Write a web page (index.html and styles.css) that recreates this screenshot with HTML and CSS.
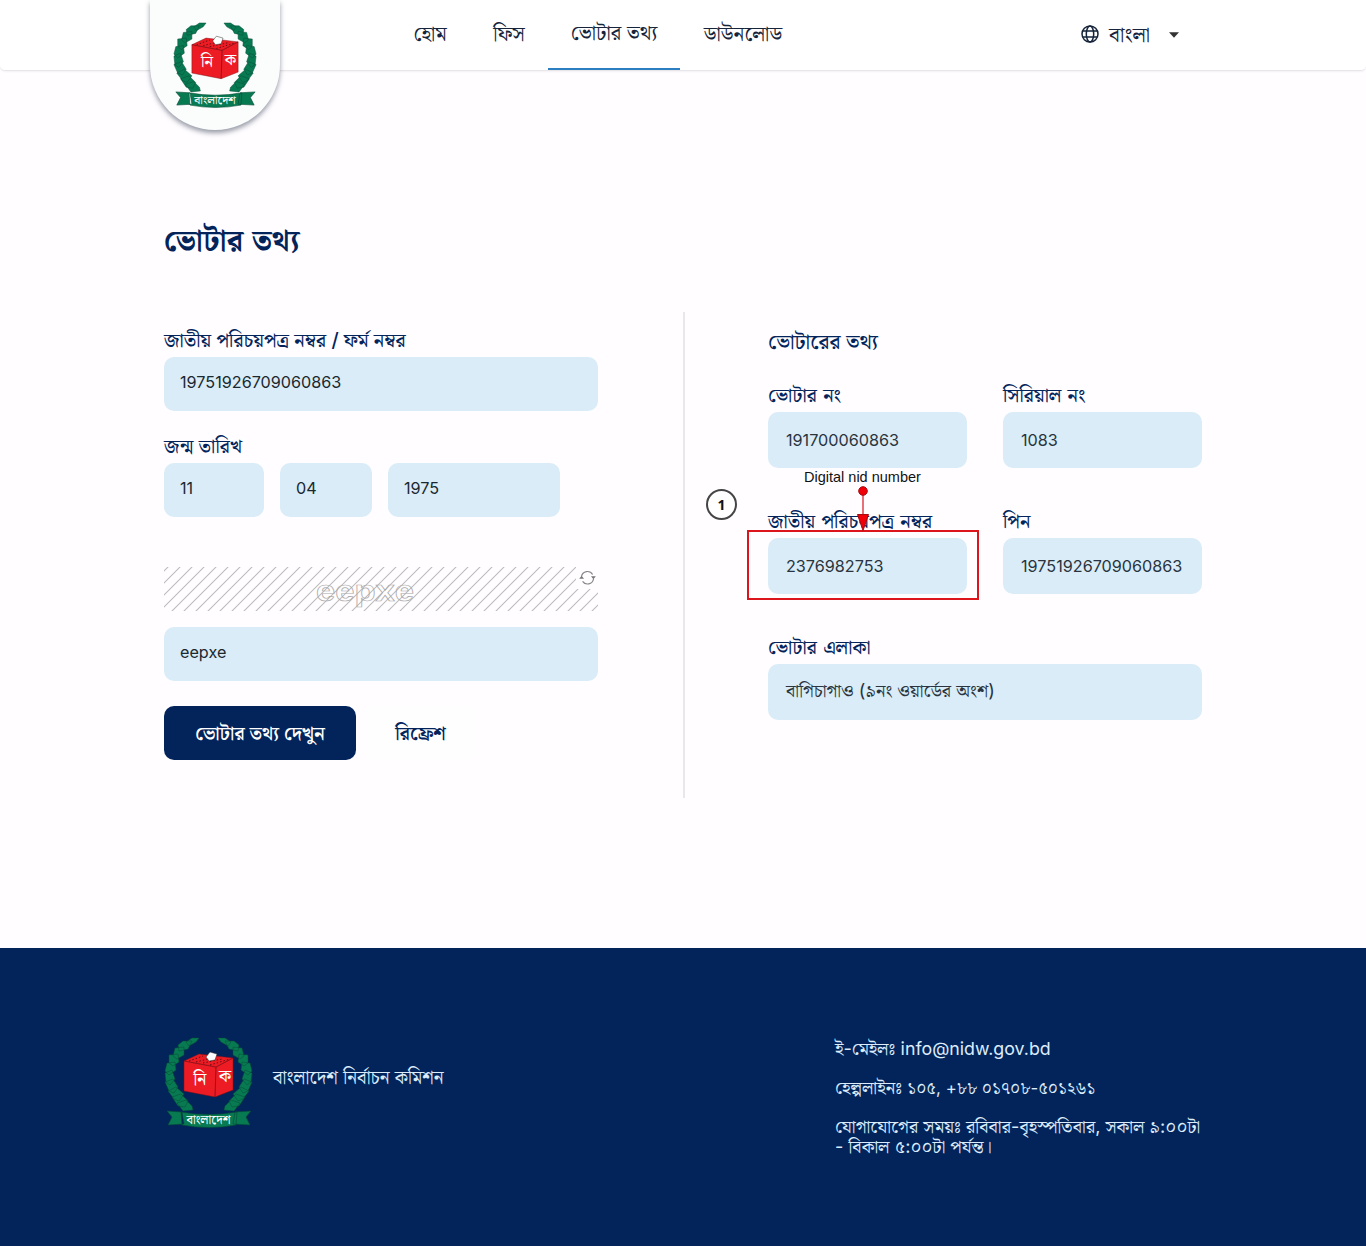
FILE: index.html
```html
<!DOCTYPE html>
<html lang="bn">
<head>
<meta charset="utf-8">
<title>ভোটার তথ্য</title>
<link rel="stylesheet" href="styles.css">
</head>
<body>
<svg class="defs" width="0" height="0" aria-hidden="true">
  <defs>
    <g id="branch" fill="#087a52" stroke="#064a35" stroke-width=".5">
      <path d="M35 1L28 1 22 5 25 9 32 5ZM28 4L19 4 14 8 15 14 24 12ZM20 10L11 11 9 19 13 22 20 18ZM14 17L5 18 5 26 9 29 15 25ZM11 25L3 26 1 34 5 38 12 33ZM8 33L1 36 2 45 6 48 11 42ZM9 42L1 45 5 54 10 56 14 50ZM12 50L4 54 10 62 15 64 20 57ZM17 57L8 60 14 69 21 70 24 64ZM22 63L13 66 19 74 29 73 28 69Z"/>
    </g>
    <symbol id="emblem" viewBox="0 0 89 91">
      <use href="#branch"/>
      <use href="#branch" transform="translate(89 0) scale(-1 1)"/>
      <path fill="#ed1c24" stroke="#7d1118" stroke-width=".5" d="M20 24L35 17 69 21 52 30ZM20 24L52 30 51 60 20 54ZM52 30L69 21V53L51 60Z"/>
      <path fill="none" stroke="#5e0c12" stroke-width="1" stroke-dasharray="1.5 2" d="M25 24L39 19M32 25L44 22M39 26L58 22M46 28L66 22"/>
      <path fill="#fff" stroke="#222" stroke-width=".5" d="M42 20L46 15 53 17 51 23 45 24Z"/>
      <path fill="#087a52" stroke="#064a35" stroke-width=".6" d="M18 75L3 74 8 80 4 88 20 87ZM71 75L87 74 82 80 86 88 69 87ZM17 75Q45 80 73 75L72 88Q45 93 18 88Z"/>
      <text x="36" y="48" class="emblem-letter">নি</text>
      <text x="61" y="45" class="emblem-letter">ক</text>
      <text x="44.5" y="86.5" class="emblem-name" textLength="44" lengthAdjust="spacingAndGlyphs">বাংলাদেশ</text>
    </symbol>
    <pattern id="hatch" width="12" height="44" patternUnits="userSpaceOnUse">
      <path d="M-41 45L5 -1M-29 45L17 -1M-17 45L29 -1M-5 45L41 -1M7 45L53 -1" stroke="#bcbabc" stroke-width="1.1"/>
    </pattern>
  </defs>
</svg>

<header class="topbar">
  <a class="badge"><svg class="badge-logo"><use href="#emblem"/></svg></a>
  <nav class="menu">
    <a class="menu-item home"><span>হোম</span></a>
    <a class="menu-item fees"><span>ফিস</span></a>
    <a class="menu-item voter active"><span>ভোটার তথ্য</span></a>
    <a class="menu-item download"><span>ডাউনলোড</span></a>
  </nav>
  <div class="language">
    <svg width="18" height="18" viewBox="0 0 18 18" fill="none" stroke="#15243a" stroke-width="1.5"><circle cx="9" cy="9" r="8"/><ellipse cx="9" cy="9" rx="3.7" ry="8"/><path d="M1.8 6H16.2M1.8 12H16.2"/></svg>
    <span>বাংলা</span>
    <svg class="caret" width="10" height="6" viewBox="0 0 10 6"><path d="M0 .3H10L5 5.7Z" fill="#333"/></svg>
  </div>
</header>

<main class="page">
  <h1 class="title">ভোটার তথ্য</h1>
  <div class="columns">
    <form class="search">
      <label class="label">জাতীয় পরিচয়পত্র নম্বর / ফর্ম নম্বর</label>
      <div class="input">19751926709060863</div>
      <label class="label second">জন্ম তারিখ</label>
      <div class="date">
        <div class="input">11</div>
        <div class="input">04</div>
        <div class="input">1975</div>
      </div>
      <svg class="captcha" width="434" height="44" viewBox="0 0 434 44">
        <rect width="434" height="44" fill="url(#hatch)"/>
        <text x="201" y="34" textLength="98" lengthAdjust="spacingAndGlyphs" class="captcha-text">eepxe</text>
        <rect x="412" width="22" height="22" fill="#fffdff"/>
        <g fill="none" stroke="#888" stroke-width="1.2"><path d="M417.5 9.5A6 6 0 0 1 428.6 7.5M429.5 12A6 6 0 0 1 418.6 14.3"/></g>
        <path fill="#777" d="M415.2 11.8H420L417.6 8.8ZM427 9.2H431.8L429.4 12.2Z"/>
      </svg>
      <div class="input">eepxe</div>
      <div class="actions">
        <button type="button" class="btn primary"><span>ভোটার তথ্য দেখুন</span></button>
        <button type="button" class="btn ghost"><span>রিফ্রেশ</span></button>
      </div>
    </form>

    <section class="result">
      <h2 class="subtitle">ভোটারের তথ্য</h2>
      <div class="grid">
        <div class="field"><span class="label">ভোটার নং</span><div class="value">191700060863</div></div>
        <div class="field"><span class="label">সিরিয়াল নং</span><div class="value">1083</div></div>
        <div class="field"><span class="label">জাতীয় পরিচয়পত্র নম্বর</span><div class="value">2376982753</div></div>
        <div class="field"><span class="label">পিন</span><div class="value">19751926709060863</div></div>
        <div class="field wide"><span class="label">ভোটার এলাকা</span><div class="value area">বাগিচাগাও (৯নং ওয়ার্ডের অংশ)</div></div>
      </div>
      <div class="note-box"></div>
      <div class="note-text">Digital nid number</div>
      <div class="note-number">1</div>
      <svg class="note-arrow" width="14" height="46" viewBox="0 0 14 46"><path d="M7 5V32" stroke="#d9141e" stroke-width="1.2"/><circle cx="7" cy="5" r="4.3" fill="#f00008" stroke="#a80b12"/><path d="M1.5 28.5H12.5L7 44.5Z" fill="#f00008" stroke="#a80b12"/></svg>
    </section>
  </div>
</main>

<footer class="footer">
  <div class="brand">
    <svg class="brand-logo"><use href="#emblem"/></svg>
    <span>বাংলাদেশ নির্বাচন কমিশন</span>
  </div>
  <div class="contact">
    <p>ই-মেইলঃ <span class="mail">info@nidw.gov.bd</span></p>
    <p>হেল্পলাইনঃ <span class="phone">১০৫, +৮৮ ০১৭০৮-৫০১২৬১</span></p>
    <p>যোগাযোগের সময়ঃ রবিবার-বৃহস্পতিবার, সকাল ৯:০০টা<br>- বিকাল ৫:০০টা পর্যন্ত।</p>
  </div>
</footer>
</body>
</html>
```
FILE: styles.css
```css
* { box-sizing: border-box; }
body { margin: 0; background: #fffdff; color: #02245b; font-family: Inter, "Noto Serif Bengali", "Noto Sans Bengali", sans-serif; width: 1366px; }
.defs { position: absolute; }
.emblem-letter { fill: #fff; font-size: 17px; font-weight: 500; text-anchor: middle; }
.emblem-name { fill: #fff; font-size: 12px; font-weight: 500; text-anchor: middle; }

.topbar { position: relative; display: flex; height: 71px; background: #fff; border-bottom: 1px solid #e8e6e9; border-radius: 0 0 5px 5px; box-shadow: 0 1px 2px #0000000d; padding-left: 390px; }
.badge { position: absolute; left: 150px; top: 0; width: 130px; height: 130px; padding: 22px 0 0 23px; background: #fbfcfc; border-radius: 0 0 65px 65px; box-shadow: 0 3px 5px #3c465a88; }
.badge-logo { display: block; width: 84px; height: 86px; }
.menu { display: flex; height: 70px; }
.menu-item { display: flex; align-items: center; justify-content: center; white-space: nowrap; color: #15243a; font-size: 20.6px; line-height: 24px; height: 70px; padding-bottom: 2px; }
.home { width: 80px; }
.fees { width: 78px; }
.voter { width: 132px; }
.download { width: 126px; }
.active { border-bottom: 2px solid #2c7fc0; }
.language { display: flex; align-items: center; height: 67px; margin-left: 275px; color: #15243a; font-size: 21.3px; line-height: 24px; white-space: nowrap; }
.language span { width: 42px; margin: 0 18px 0 10px; }
.caret { margin-top: 2px; }

.page { height: 877px; padding: 145px 164px 0; }
.title { margin: 0; height: 48px; font-size: 30px; line-height: 48px; font-weight: 700; word-spacing: 2px; white-space: nowrap; }
.columns { display: flex; height: 486px; margin-top: 48px; }
.search { width: 521px; padding: 17px 85px 0 0; border-right: 2px solid #e8e7ea; }
.label { display: block; height: 28px; font-size: 19.5px; line-height: 22px; font-weight: 500; white-space: nowrap; }
.second { margin-top: 24px; }
.input { height: 54px; padding: 0 16px; border-radius: 10px; background: #d9ecf7; color: #1b2830; font-size: 16.2px; line-height: 51px; }
.date { display: grid; grid-template-columns: 100px 92px 172px; gap: 16px; }
.captcha { display: block; margin: 50px 0 16px; }
.captcha-text { font-family: "Liberation Sans", sans-serif; font-weight: 700; font-size: 29px; fill: none; stroke: #aaa; stroke-width: .7; text-anchor: middle; }
.actions { display: flex; gap: 8px; margin-top: 25px; }
.btn { display: flex; align-items: center; justify-content: center; height: 54px; padding: 0; border: 0; border-radius: 10px; font: 600 19.3px/24px Inter, "Noto Serif Bengali", "Noto Sans Bengali", sans-serif; white-space: nowrap; }
.primary { width: 192px; background: #02245b; color: #fff; }
.ghost { width: 113px; background: #fffeff; color: #02245b; }

.result { position: relative; width: 517px; padding: 17px 0 0 83px; }
.subtitle { margin: 0; height: 55px; font-size: 21.3px; line-height: 24px; font-weight: 500; }
.grid { display: grid; grid-template-columns: 199px 199px; column-gap: 36px; row-gap: 42px; }
.grid .label { word-spacing: 1px; }
.wide { grid-column: 1 / 3; }
.value { height: 56px; padding: 0 18px; border-radius: 10px; background: #d9ecf7; color: #29343e; font-size: 16.2px; line-height: 56px; white-space: nowrap; }
.area { font-size: 18.2px; line-height: 53px; }

/* annotations over the result fields */
.note-box { position: absolute; left: 62px; top: 218px; width: 232px; height: 70px; border: 2px solid #dc141c; }
.note-text { position: absolute; left: 119px; top: 156px; font: 14.5px/18px "Liberation Sans", sans-serif; color: #111; white-space: nowrap; }
.note-number { position: absolute; left: 21px; top: 177px; width: 31px; height: 31px; border: 2px solid #454545; border-radius: 50%; background: #fff; color: #111; font: 700 14px/28px "Open Sans", sans-serif; text-align: center; }
.note-arrow { position: absolute; left: 171px; top: 174px; }

.footer { display: flex; justify-content: space-between; height: 298px; padding: 89px 164px 0; background: #02245b; color: #dcecfb; font-size: 18.2px; }
.brand { display: flex; align-items: center; gap: 20px; height: 91px; font-size: 18.8px; white-space: nowrap; }
.brand span { padding-bottom: 10px; }
.brand-logo { width: 89px; height: 91px; }
.contact { width: 367px; white-space: nowrap; line-height: 20px; padding-top: 1px; }
.contact p { margin: 0 0 18px; }
.mail { font-size: 17.8px; }
.phone { font-size: 16.8px; }
```
